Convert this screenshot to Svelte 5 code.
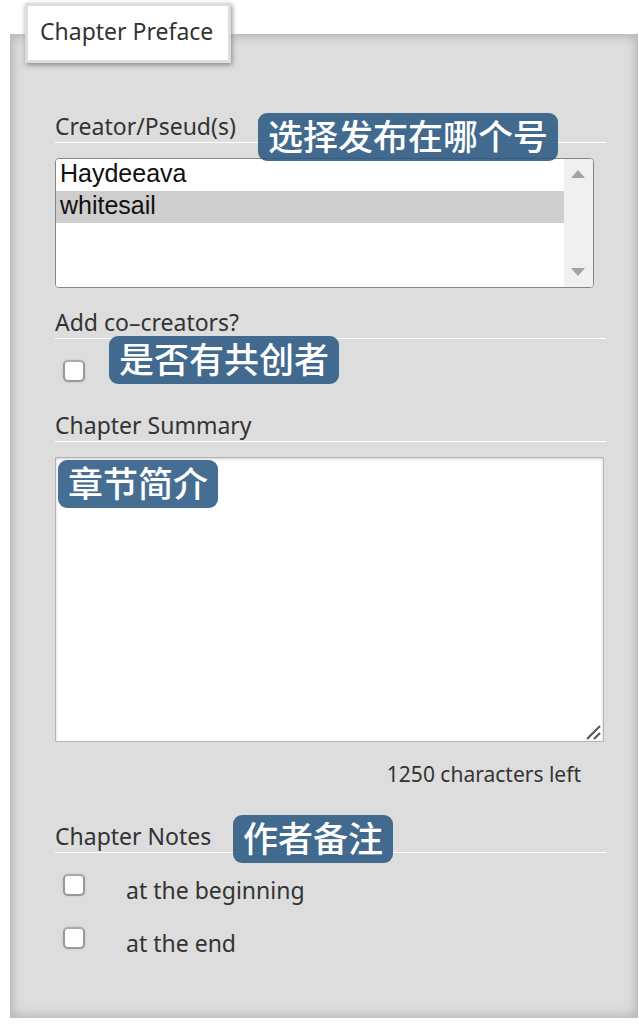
<script>
  let pseuds = $state(['whitesail']);
  let summary = $state('');
  let coCreators = $state(false);
  let notesStart = $state(false);
  let notesEnd = $state(false);
  const limit = 1250;
</script>

<form class="panel">
  <h2>Chapter Preface</h2>

  <div class="fields">
    <div class="heading">
      <label for="pseuds">Creator/Pseud(s)</label>
      <span class="tag tag-pseud">选择发布在哪个号</span>
    </div>
    <div class="listbox">
      <select id="pseuds" multiple size="4" bind:value={pseuds}>
        <option value="Haydeeava">Haydeeava</option>
        <option value="whitesail">whitesail</option>
      </select>
      <div class="scrollbar" aria-hidden="true">
        <svg width="14" height="8" viewBox="0 0 14 8"><path d="M0 8L7 0L14 8Z" fill="#a3a3a3" /></svg>
        <svg width="14" height="8" viewBox="0 0 14 8"><path d="M0 0L7 8L14 0Z" fill="#a3a3a3" /></svg>
      </div>
    </div>

    <div class="heading">
      <label for="co">Add co–creators?</label>
      <span class="tag tag-co">是否有共创者</span>
    </div>
    <div class="single"><input id="co" type="checkbox" bind:checked={coCreators} /></div>

    <div class="heading"><label for="summary">Chapter Summary</label></div>
    <div class="editor">
      <textarea id="summary" maxlength={limit} bind:value={summary}></textarea>
      <span class="tag tag-summary">章节简介</span>
      <svg class="grip" width="16" height="16" viewBox="0 0 16 16" aria-hidden="true">
        <path d="M1 14L14 1M8 14L14 8" stroke="#555" stroke-width="2" fill="none" />
      </svg>
    </div>
    <p class="counter">{limit - summary.length} characters left</p>

    <div class="heading">
      <span>Chapter Notes</span>
      <span class="tag tag-notes">作者备注</span>
    </div>
    <div class="notes">
      <div class="choice">
        <input id="start" type="checkbox" bind:checked={notesStart} />
        <label for="start">at the beginning</label>
      </div>
      <div class="choice">
        <input id="end" type="checkbox" bind:checked={notesEnd} />
        <label for="end">at the end</label>
      </div>
    </div>
  </div>
</form>

<style>
  :global(body) {
    background: #fff;
  }

  .panel {
    box-sizing: border-box;
    display: flow-root;
    margin: 34px 1px 6px 10px;
    padding-bottom: 58px;
    border: 1px solid #c0c0c0;
    background: #ddd;
    box-shadow: inset 0 0 12px #aaa;
    color: #333;
    font-family: "Noto Sans", "Noto Sans CJK SC", sans-serif;
    font-size: 23px;
    line-height: 32px;
  }

  h2 {
    width: fit-content;
    margin: -32px 0 48px 14px;
    padding: 9px 15px 13px 12px;
    border: 3px solid #ddd;
    background: #fff;
    box-shadow: 1px 2px 5px #888;
    font-size: 23px;
    font-weight: 400;
    line-height: 32px;
  }

  .fields {
    margin: 0 31px 0 44px;
  }

  .heading {
    position: relative;
    padding-bottom: 1px;
    border-bottom: 1px solid #fff;
    line-height: 30px;
  }

  .tag {
    position: absolute;
    z-index: 1;
    padding: 0 10px 4px;
    border-radius: 9px;
    background: rgba(41, 88, 130, 0.87);
    color: #fff;
    font-family: "Noto Sans CJK SC", sans-serif;
    font-size: 35px;
    font-weight: 500;
    line-height: 44px;
    white-space: nowrap;
    pointer-events: none;
  }

  .tag-pseud {
    top: 2px;
    left: 203px;
  }

  .tag-co {
    top: 29px;
    left: 54px;
  }

  .tag-summary {
    top: 3px;
    left: 3px;
  }

  .tag-notes {
    top: -6px;
    left: 178px;
  }

  .listbox {
    box-sizing: border-box;
    display: flex;
    height: 130px;
    margin: 15px 12px 19px 0;
    overflow: hidden;
    border: 1px solid #858585;
    border-radius: 4px;
    background: #fff;
  }

  select {
    flex: 1;
    min-width: 0;
    margin: 0;
    padding: 0;
    border: 0;
    outline: 0;
    background: #fff;
    font-family: "Liberation Sans", sans-serif;
    font-size: 25px;
    overflow: hidden;
  }

  option {
    box-sizing: border-box;
    height: 32px;
    min-height: 32px;
    padding: 0 4px;
    color: #111;
    line-height: 30px;
  }

  .scrollbar {
    box-sizing: border-box;
    display: flex;
    flex-direction: column;
    align-items: center;
    justify-content: space-between;
    width: 29px;
    padding: 11px 1px 11px 0;
    background: #f0f0f0;
  }

  input {
    appearance: none;
    box-sizing: border-box;
    flex: none;
    width: 22px;
    height: 22px;
    margin: 0;
    border: 2px solid #999;
    border-top-color: #aaa;
    border-radius: 5px;
    background: #fff;
    box-shadow: 0 0 2px #bbb;
  }

  input:checked {
    background: #3f6a90;
  }

  .single {
    display: flex;
    padding: 21px 8px 28px;
  }

  .editor {
    position: relative;
    margin: 15px 2px 0 0;
  }

  textarea {
    box-sizing: border-box;
    display: block;
    width: 100%;
    height: 285px;
    margin: 0;
    padding: 8px;
    border: 1px solid #b5b5b5;
    outline: 0;
    resize: none;
    background: #fff;
    box-shadow: inset 0 1px 3px #ccc;
    font: inherit;
  }

  .grip {
    position: absolute;
    right: 2px;
    bottom: 1px;
  }

  .counter {
    margin: 16px 25px 31px 0;
    font-size: 21px;
    text-align: right;
  }

  .notes {
    display: flex;
    flex-direction: column;
    gap: 21px;
    padding: 21px 8px 0;
  }

  .choice {
    display: flex;
    align-items: flex-start;
    gap: 41px;
    height: 32px;
  }
</style>
